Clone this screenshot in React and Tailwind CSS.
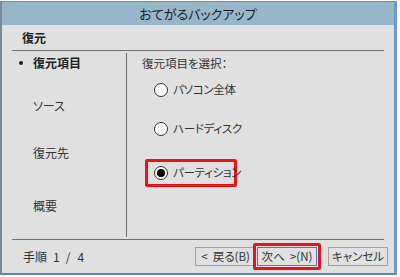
export default function App() {
  const font = { fontFamily: '"Noto Sans CJK JP", "Noto Sans", sans-serif' };
  return (
    <div className="w-[400px] h-[277px] bg-white overflow-hidden [font-feature-settings:'palt'] whitespace-nowrap" style={font}>
      <div className="mt-[1px] w-[397px] h-[274px] border-l-2 border-t border-b-2 border-r-[3px] border-l-[#7b8a99] border-t-[#7b8a99] border-b-[#5f84a8] border-r-[#6a9bd0] bg-[#e0e0e0] flex flex-col text-[#222]">
        <div className="h-[23px] bg-[#98b6c9] flex items-center justify-center text-[13px] leading-none text-[#1a1a1a]">
          おてがるバックアップ
        </div>
        <div className="h-[25px] flex items-center pl-[20px] text-[12px] font-bold leading-none">復元</div>
        <div className="mx-[10px] border-t border-[#707070]"></div>
        <div className="flex h-[188px]">
          <div className="w-[114px] shrink-0 ml-[10px] flex flex-col text-[12px] leading-none">
            <div className="h-[5px] shrink-0"></div>
            <div className="flex items-center h-[14px] shrink-0 pl-[7px]">
              <div className="w-[4px] h-[4px] shrink-0 rounded-full bg-[#222]"></div>
              <div className="ml-[10px] font-bold">復元項目</div>
            </div>
            <div className="h-[29px] shrink-0"></div>
            <div className="h-[14px] pl-[21px] text-[#333] flex items-center shrink-0">ソース</div>
            <div className="h-[33px] shrink-0"></div>
            <div className="h-[14px] pl-[21px] text-[#333] flex items-center shrink-0">復元先</div>
            <div className="h-[39px] shrink-0"></div>
            <div className="h-[14px] pl-[21px] text-[#333] flex items-center shrink-0">概要</div>
          </div>
          <div className="w-px shrink-0 bg-[#707070] mt-[2px] mb-[2px]"></div>
          <div className="flex-1 flex flex-col text-[11.5px] leading-none pl-[15px]">
            <div className="h-[6px] shrink-0"></div>
            <div className="h-[14px] text-[#333] flex items-center shrink-0">復元項目を選択：</div>
            <div className="h-[11px] shrink-0"></div>
            <div className="flex items-center h-[16px] pl-[12px] shrink-0">
              <span className="w-[14px] h-[14px] shrink-0 rounded-full border border-[#333] bg-white"></span>
              <span className="ml-[5px] text-[#333] tracking-[-0.3px]">パソコン全体</span>
            </div>
            <div className="h-[23px] shrink-0"></div>
            <div className="flex items-center h-[16px] pl-[12px] shrink-0">
              <span className="w-[14px] h-[14px] shrink-0 rounded-full border border-[#333] bg-white"></span>
              <span className="ml-[5px] text-[#333] tracking-[-0.3px]">ハードディスク</span>
            </div>
            <div className="h-[22px] shrink-0"></div>
            <div className="flex items-center w-[92px] h-[28px] ml-[3px] pl-[6px] border-[3px] border-[#e8141c] rounded-[2px] shrink-0">
              <span className="w-[14px] h-[14px] shrink-0 rounded-full border border-[#333] bg-white flex items-center justify-center">
                <span className="w-[8px] h-[8px] rounded-full bg-black"></span>
              </span>
              <span className="ml-[5px] text-[#333] tracking-[-0.3px]">パーティション</span>
            </div>
          </div>
        </div>
        <div className="mx-[10px] border-t border-[#707070]"></div>
        <div className="flex-1 flex items-center text-[12px] leading-none">
          <div className="pl-[21px] text-[#333] flex items-center">
            <span>手順</span>
            <span className="ml-[6px]">1</span>
            <span className="ml-[6px]">/</span>
            <span className="ml-[7px]">4</span>
          </div>
          <div className="ml-auto flex items-center mr-[6px] text-[11.5px]">
            <div className="w-[61px] h-[19px] border border-[#a0a0a0] bg-[#e1e1e1] flex items-center justify-center text-[#333]">&lt;&nbsp;&nbsp;戻る(B)</div>
            <div className="w-[68px] h-[27px] border-[3px] border-[#e8141c] rounded-[2px] flex items-center justify-center ml-[-3px]">
              <div className="w-[60px] h-[19px] border border-[#3c7fe0] bg-[#e1e1e1] flex items-center justify-center text-[#333]">次へ&nbsp;&nbsp;&gt;(N)</div>
            </div>
            <div className="w-[60px] h-[19px] border border-[#a0a0a0] bg-[#e1e1e1] flex items-center justify-center text-[#333] ml-[7px]">キャンセル</div>
          </div>
        </div>
      </div>
    </div>
  );
}
